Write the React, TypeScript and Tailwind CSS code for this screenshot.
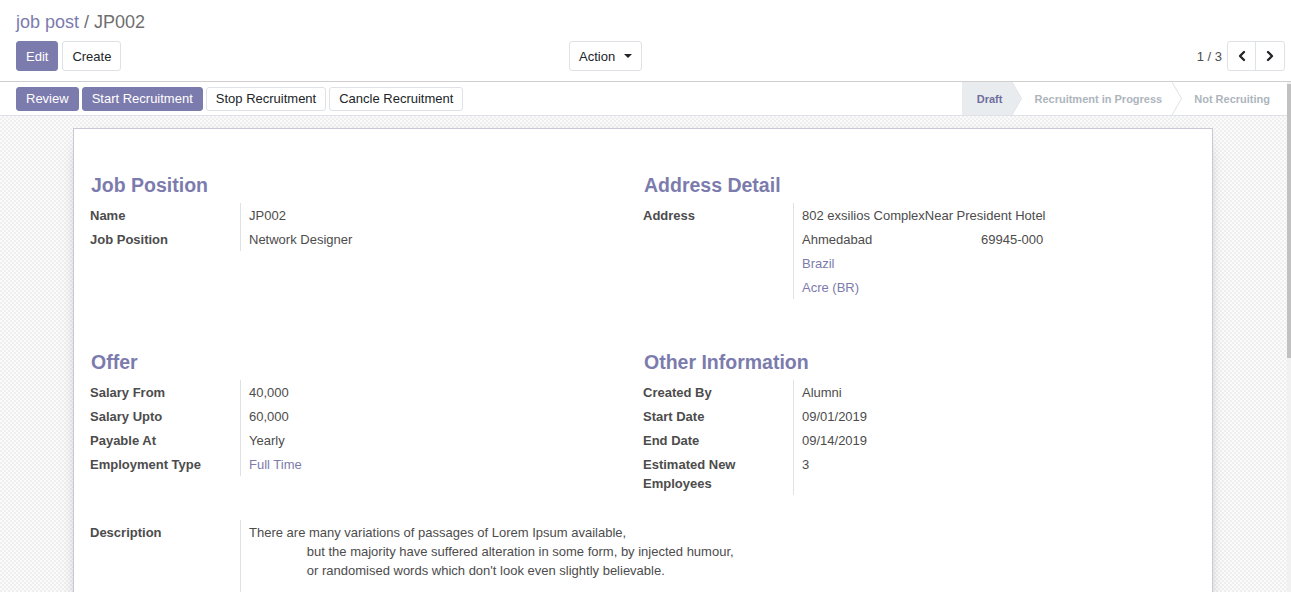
import { ChevronLeft, ChevronRight } from "lucide-react"

const purple = "text-[#7C7BAD]"

function Field({ label, children }: { label: string; children: React.ReactNode }) {
  return (
    <div className="flex">
      <div className="w-[151px] shrink-0 border-r border-[#dee2e6] py-[2.5px] pr-2 font-bold leading-[19px]">{label}</div>
      <div className="flex-1 py-[2.5px] pl-2 leading-[19px]">{children}</div>
    </div>
  )
}

function Heading({ children }: { children: React.ReactNode }) {
  return <h2 className={`mb-[6px] pl-px text-[19.5px] font-bold leading-[24px] ${purple}`}>{children}</h2>
}

function Arrow({ filled }: { filled?: boolean }) {
  return (
    <svg width="10" height="33" viewBox="0 0 10 33" className="shrink-0">
      {filled && <polygon points="0,0 9,16.5 0,33" fill="#e9ecef" />}
      <polyline points="0,0 9.5,16.5 0,33" fill="none" stroke="#dee2e6" strokeWidth="1" />
    </svg>
  )
}

const desc =
  "There are many variations of passages of Lorem Ipsum available,\n                but the majority have suffered alteration in some form, by injected humour,\n                or randomised words which don't look even slightly believable."

export default function App() {
  return (
    <div className="flex h-[592px] flex-col overflow-hidden bg-white font-['Liberation_Sans',Arial,sans-serif] text-[13px] text-[#4c4c4c]">
      {/* Control panel */}
      <div className="border-b border-[#cfcfcf] pt-[10px] pr-[6px] pb-[10px] pl-4">
        <div className="text-[18px] leading-[24px]">
          <span className={purple}>job post</span>
          <span className="text-[#6f6f6f]"> / JP002</span>
        </div>
        <div className="mt-[7px] flex items-center">
          <div className="flex w-[553px] gap-1">
            <button className="h-[30px] rounded-[3px] border border-[#7C7BAD] bg-[#7C7BAD] px-[9px] pt-px text-white">Edit</button>
            <button className="h-[30px] rounded-[3px] border border-[#dee2e6] bg-white px-[9px] pt-px text-[#212529]">Create</button>
          </div>
          <button className="flex h-[30px] items-center gap-[9px] rounded-[3px] border border-[#dee2e6] bg-white px-[9px] pt-px text-[#212529]">
            Action
            <span className="mb-[2px] h-0 w-0 border-x-[4px] border-t-[4px] border-x-transparent border-t-[#212529]" />
          </button>
          <div className="ml-auto flex items-center gap-[5px]">
            <span className="pt-px text-[#4c4c4c]">1 / 3</span>
            <div className="flex h-[30px] rounded-[3px] border border-[#dee2e6]">
              <button className="flex w-[28px] items-center justify-center border-r border-[#dee2e6] text-[#212529]">
                <ChevronLeft size={16} strokeWidth={3.5} />
              </button>
              <button className="flex w-[28px] items-center justify-center text-[#212529]">
                <ChevronRight size={16} strokeWidth={3.5} />
              </button>
            </div>
          </div>
        </div>
      </div>

      <div className="flex min-h-0 flex-1">
        <div className="flex min-w-0 flex-1 flex-col overflow-hidden">
          {/* Status bar */}
          <div className="flex h-[34px] shrink-0 items-center border-b border-[#dee2e6] bg-white pl-4">
            <div className="flex gap-[3px]">
              <button className="h-[24px] rounded-[3px] border border-[#7C7BAD] bg-[#7C7BAD] px-[9px] text-white">Review</button>
              <button className="h-[24px] rounded-[3px] border border-[#7C7BAD] bg-[#7C7BAD] px-[9px] text-white">Start Recruitment</button>
              <button className="h-[24px] rounded-[3px] border border-[#dee2e6] bg-white px-[9px] text-[#212529]">Stop Recruitment</button>
              <button className="h-[24px] rounded-[3px] border border-[#dee2e6] bg-white px-[9px] text-[#212529]">Cancle Recruitment</button>
            </div>
            <div className="ml-auto flex h-[33px] self-start text-[11px] font-bold">
              <div className="flex items-center bg-[#e9ecef] pt-[2px] pr-[10px] pl-[15px] text-[#6f6e9e]">Draft</div>
              <Arrow filled />
              <div className="flex items-center pt-[2px] pr-[10px] pl-[12px] text-[#adb5bd]">Recruitment in Progress</div>
              <Arrow />
              <div className="flex items-center pt-[2px] pr-[17px] pl-[12px] text-[#adb5bd]">Not Recruiting</div>
            </div>
          </div>

          {/* Sheet background */}
          <div className="flex-1 bg-[image:repeating-conic-gradient(#efefef_0%_25%,#fbfbfb_0%_50%)] bg-[length:4px_4px] pt-3 pr-px">
            <div className="mx-auto w-[1140px] border border-[#c9c8d6] bg-white px-[16px] pt-[44px] pb-10 shadow-[0_5px_20px_-15px_black]">
              <div className="grid grid-cols-2">
                <div>
                  <Heading>Job Position</Heading>
                  <Field label="Name">JP002</Field>
                  <Field label="Job Position">Network Designer</Field>
                </div>
                <div>
                  <Heading>Address Detail</Heading>
                  <div className="flex">
                    <div className="w-[151px] shrink-0 border-r border-[#dee2e6] py-[2.5px] pr-2 font-bold leading-[19px]">Address</div>
                    <div className="flex-1 pl-2 leading-[19px]">
                      <div className="py-[2.5px]">802 exsilios ComplexNear President Hotel</div>
                      <div className="flex py-[2.5px]">
                        <span className="w-[179px]">Ahmedabad</span>
                        <span>69945-000</span>
                      </div>
                      <div className={`py-[2.5px] ${purple}`}>Brazil</div>
                      <div className={`py-[2.5px] ${purple}`}>Acre (BR)</div>
                    </div>
                  </div>
                </div>
              </div>

              <div className="mt-[51px] grid grid-cols-2">
                <div>
                  <Heading>Offer</Heading>
                  <Field label="Salary From">40,000</Field>
                  <Field label="Salary Upto">60,000</Field>
                  <Field label="Payable At">Yearly</Field>
                  <Field label="Employment Type">
                    <span className={purple}>Full Time</span>
                  </Field>
                </div>
                <div>
                  <Heading>Other Information</Heading>
                  <Field label="Created By">Alumni</Field>
                  <Field label="Start Date">09/01/2019</Field>
                  <Field label="End Date">09/14/2019</Field>
                  <Field label="Estimated New Employees">3</Field>
                </div>
              </div>

              <div className="mt-[25px]">
                <Field label="Description">
                  <div className="whitespace-pre-wrap pb-4">{desc}</div>
                </Field>
              </div>
            </div>
          </div>
        </div>

        {/* Scrollbar */}
        <div className="w-[4px] shrink-0 bg-[#f1f1f1] pt-[2px]">
          <div className="h-[274px] bg-[#c1c1c1]" />
        </div>
      </div>
    </div>
  )
}
